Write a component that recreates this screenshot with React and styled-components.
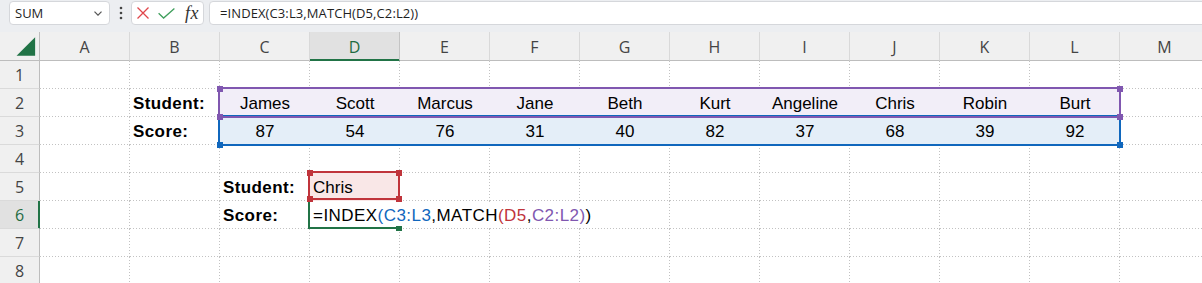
import React from 'react';
import styled, { createGlobalStyle, css } from 'styled-components';

const GlobalStyle = createGlobalStyle`
  html, body { margin: 0; padding: 0; background: #fff; overflow: hidden; }
  #root { width: 1202px; height: 283px; }
`;

const Window = styled.div`
  width: 1202px;
  height: 283px;
  overflow: hidden;
  display: flex;
  flex-direction: column;
  background: #fff;
`;

/* ---------- formula bar ---------- */
const Toolbar = styled.div`
  flex: 0 0 32px;
  height: 32px;
  box-sizing: border-box;
  background: #eceef1;
  display: flex;
  align-items: flex-start;
  padding: 1px 0 0 9px;
  font-family: "Open Sans", "Liberation Sans", sans-serif;
  color: #1f1f1f;
`;

const Field = styled.div`
  box-sizing: border-box;
  height: 24px;
  background: #fff;
  border: 1px solid #d5d7db;
  border-radius: 4px;
  display: flex;
  align-items: center;
`;

const NameBox = styled(Field)`
  flex: 0 0 101px;
  padding: 0 7px 0 5px;
  justify-content: space-between;
  font-size: 13px;
`;

const MoreButton = styled.div`
  flex: 0 0 21px;
  height: 24px;
  display: flex;
  align-items: center;
  justify-content: center;
`;

const IconBox = styled(Field)`
  flex: 0 0 73px;
  padding-left: 5px;
  gap: 9px;
`;

const Fx = styled.span`
  font-family: "Liberation Serif", "Times New Roman", serif;
  font-style: italic;
  font-size: 18px;
  line-height: 20px;
  color: #333;
  margin-left: 1px;
  letter-spacing: 0.5px;
`;

const FormulaField = styled(Field)`
  flex: 1 1 auto;
  margin: 0 -20px 0 5px;
  padding-left: 10px;
  font-size: 13px;
  letter-spacing: 0.1px;
  white-space: nowrap;
`;

/* ---------- sheet grid ---------- */
const Sheet = styled.div`
  display: grid;
  grid-template-columns: 40px repeat(13, 90px);
  grid-template-rows: 29px repeat(8, 28px);
  width: 1210px;
  flex: 0 0 auto;
`;

const headerBase = css`
  box-sizing: border-box;
  display: flex;
  align-items: center;
  justify-content: center;
  font-family: "Open Sans", "Liberation Sans", sans-serif;
  font-size: 16px;
`;

const Corner = styled.div`
  ${headerBase};
  grid-row: 1;
  grid-column: 1;
  background: #f0f0f0;
  border-right: 1px solid #bdbdbd;
  border-bottom: 1px solid #bdbdbd;
`;

const ColHeader = styled.div`
  ${headerBase};
  grid-row: 1;
  grid-column: ${(p) => p.$c};
  padding-top: 2px;
  background: ${(p) => (p.$active ? '#e1e1e1' : '#f0f0f0')};
  color: ${(p) => (p.$active ? '#1e6b41' : '#444')};
  border-right: 1px solid ${(p) => (p.$active ? '#c4c4c4' : '#d9d9d9')};
  border-bottom: 1px solid ${(p) => (p.$active ? '#217346' : '#bdbdbd')};
  box-shadow: ${(p) => (p.$active ? 'inset 0 -1px 0 #217346' : 'none')};
`;

const RowHeader = styled.div`
  ${headerBase};
  grid-row: ${(p) => p.$r};
  grid-column: 1;
  padding-top: 1px;
  background: ${(p) => (p.$active ? '#e1e1e1' : '#f0f0f0')};
  color: ${(p) => (p.$active ? '#1e6b41' : '#444')};
  border-bottom: 1px solid #dadada;
  border-right: 1px solid ${(p) => (p.$active ? '#217346' : '#bdbdbd')};
  box-shadow: ${(p) => (p.$active ? 'inset -1px 0 0 #217346' : 'none')};
`;

const gridlines = css`
  background-image: linear-gradient(to bottom, #c2c2c2 1px, transparent 1px),
    linear-gradient(to right, #c2c2c2 1px, transparent 1px);
  background-size: 1px 3px, 3px 1px;
  background-position: right top, left bottom;
  background-repeat: repeat-y, repeat-x;
`;

const Cell = styled.div`
  grid-row: ${(p) => p.$r};
  grid-column: ${(p) => p.$c};
  box-sizing: border-box;
  min-width: 0;
  padding: 1px 3px 0;
  font-family: "Liberation Sans", Arial, sans-serif;
  font-size: 17px;
  line-height: 27px;
  font-weight: ${(p) => (p.$bold ? 700 : 400)};
  letter-spacing: ${(p) => (p.$bold ? '0.4px' : '0')};
  text-align: ${(p) => p.$align || 'left'};
  white-space: nowrap;
  color: #000;
  ${(p) => (p.$fill ? css`background: ${p.$fill};` : gridlines)}
  ${(p) =>
    p.$overflow &&
    css`
      overflow: visible;
      position: relative;
      z-index: 1;
    `}
`;

const EditText = styled.span`
  display: inline-block;
  height: 26px;
  background: #fff;
  padding-right: 4px;
  letter-spacing: 0.45px;
`;

const Ref = styled.span`
  color: ${(p) => p.$color};
`;

const RangeBox = styled.div`
  grid-row: ${(p) => p.$r};
  grid-column: ${(p) => p.$c};
  margin: ${(p) => p.$m};
  border: 2px solid ${(p) => p.$color};
  position: relative;
  z-index: 2;
  pointer-events: none;
`;

const ActiveBox = styled.div`
  grid-row: ${(p) => p.$r};
  grid-column: ${(p) => p.$c};
  margin: 0 0 0 -2px;
  border-left: 2px solid #217346;
  border-bottom: 2px solid #217346;
  position: relative;
  z-index: 2;
  pointer-events: none;
`;

const Handle = styled.span`
  position: absolute;
  width: 6px;
  height: 6px;
  background: ${(p) => p.$color};
  ${(p) => (p.$pos[0] === 't' ? 'top: -3px;' : 'bottom: -4px;')}
  ${(p) => (p.$pos[1] === 'l' ? 'left: -3px;' : 'right: -4px;')}
`;

const FillHandle = styled.span`
  position: absolute;
  right: -2px;
  bottom: -4px;
  width: 6px;
  height: 5px;
  background: #217346;
`;

/* ---------- data ---------- */
const COLS = ['A', 'B', 'C', 'D', 'E', 'F', 'G', 'H', 'I', 'J', 'K', 'L', 'M'];
const NAMES = ['James', 'Scott', 'Marcus', 'Jane', 'Beth', 'Kurt', 'Angeline', 'Chris', 'Robin', 'Burt'];
const SCORES = [87, 54, 76, 31, 40, 82, 37, 68, 39, 92];

const PURPLE = '#8057b0';
const BLUE = '#1067bd';
const RED = '#c0343b';

function cellContent(row, col) {
  const idx = col - 2; // C => 0
  if (row === 2) {
    if (col === 1) return { text: 'Student:', bold: true };
    if (idx >= 0 && idx < 10) return { text: NAMES[idx], align: 'center', fill: '#f2eef8' };
  }
  if (row === 3) {
    if (col === 1) return { text: 'Score:', bold: true };
    if (idx >= 0 && idx < 10) return { text: String(SCORES[idx]), align: 'center', fill: '#e4eef8' };
  }
  if (row === 5) {
    if (col === 2) return { text: 'Student:', bold: true };
    if (col === 3) return { text: 'Chris', fill: '#f9e7e7' };
  }
  if (row === 6) {
    if (col === 2) return { text: 'Score:', bold: true };
    if (col === 3) return { formula: true };
  }
  return {};
}

function Formula() {
  return (
    <EditText>
      =INDEX<Ref $color={BLUE}>(C3:L3</Ref>,MATCH<Ref $color={RED}>(D5</Ref>,
      <Ref $color={PURPLE}>C2:L2)</Ref>)
    </EditText>
  );
}

export default function App() {
  const rows = [1, 2, 3, 4, 5, 6, 7, 8];
  return (
    <Window>
      <GlobalStyle />
      <Toolbar>
        <NameBox>
          <span>SUM</span>
          <svg width="8" height="5" viewBox="0 0 8 5" fill="none">
            <path d="M0.5 0.7 L4 4.2 L7.5 0.7" stroke="#555" strokeWidth="1.2" />
          </svg>
        </NameBox>
        <MoreButton>
          <svg width="4" height="14" viewBox="0 0 4 14">
            <circle cx="2" cy="2" r="1.3" fill="#444" />
            <circle cx="2" cy="7" r="1.3" fill="#444" />
            <circle cx="2" cy="12" r="1.3" fill="#444" />
          </svg>
        </MoreButton>
        <IconBox>
          <svg width="12" height="12" viewBox="0 0 12 12" fill="none">
            <path d="M0.5 0.5 L11.5 11.5 M11.5 0.5 L0.5 11.5" stroke="#e0464b" strokeWidth="1.3" />
          </svg>
          <svg width="17" height="11" viewBox="0 0 17 11" fill="none">
            <path d="M0.6 5.3 L5.6 10 L16.4 0.6" stroke="#3f9f5c" strokeWidth="1.3" />
          </svg>
          <Fx>fx</Fx>
        </IconBox>
        <FormulaField>=INDEX(C3:L3,MATCH(D5,C2:L2))</FormulaField>
      </Toolbar>

      <Sheet>
        <Corner>
          <svg width="40" height="28" viewBox="0 0 40 28">
            <polygon points="17,24 36,24 36,5" fill="#217346" />
          </svg>
        </Corner>
        {COLS.map((c, i) => (
          <ColHeader key={c} $c={i + 2} $active={c === 'D'}>
            {c}
          </ColHeader>
        ))}
        {rows.map((r) => (
          <React.Fragment key={r}>
            <RowHeader $r={r + 1} $active={r === 6}>
              {r}
            </RowHeader>
            {COLS.map((c, ci) => {
              const d = cellContent(r, ci);
              return (
                <Cell
                  key={c + r}
                  $r={r + 1}
                  $c={ci + 2}
                  $bold={d.bold}
                  $align={d.align}
                  $fill={d.fill}
                  $overflow={d.formula}
                >
                  {d.formula ? <Formula /> : d.text}
                </Cell>
              );
            })}
          </React.Fragment>
        ))}

        <RangeBox $r={4} $c="4 / 14" $m="-2px -1px -1px -2px" $color={BLUE}>
          <Handle $pos="tl" $color={BLUE} />
          <Handle $pos="tr" $color={BLUE} />
          <Handle $pos="bl" $color={BLUE} />
          <Handle $pos="br" $color={BLUE} />
        </RangeBox>
        <RangeBox $r={3} $c="4 / 14" $m="-2px -1px -1px -2px" $color={PURPLE}>
          <Handle $pos="tl" $color={PURPLE} />
          <Handle $pos="tr" $color={PURPLE} />
          <Handle $pos="bl" $color={PURPLE} />
          <Handle $pos="br" $color={PURPLE} />
        </RangeBox>
        <ActiveBox $r={7} $c={5}>
          <FillHandle />
        </ActiveBox>
        <RangeBox $r={6} $c={5} $m="-2px 0 1px -2px" $color={RED}>
          <Handle $pos="tl" $color={RED} />
          <Handle $pos="tr" $color={RED} />
          <Handle $pos="bl" $color={RED} />
          <Handle $pos="br" $color={RED} />
        </RangeBox>
      </Sheet>
    </Window>
  );
}
